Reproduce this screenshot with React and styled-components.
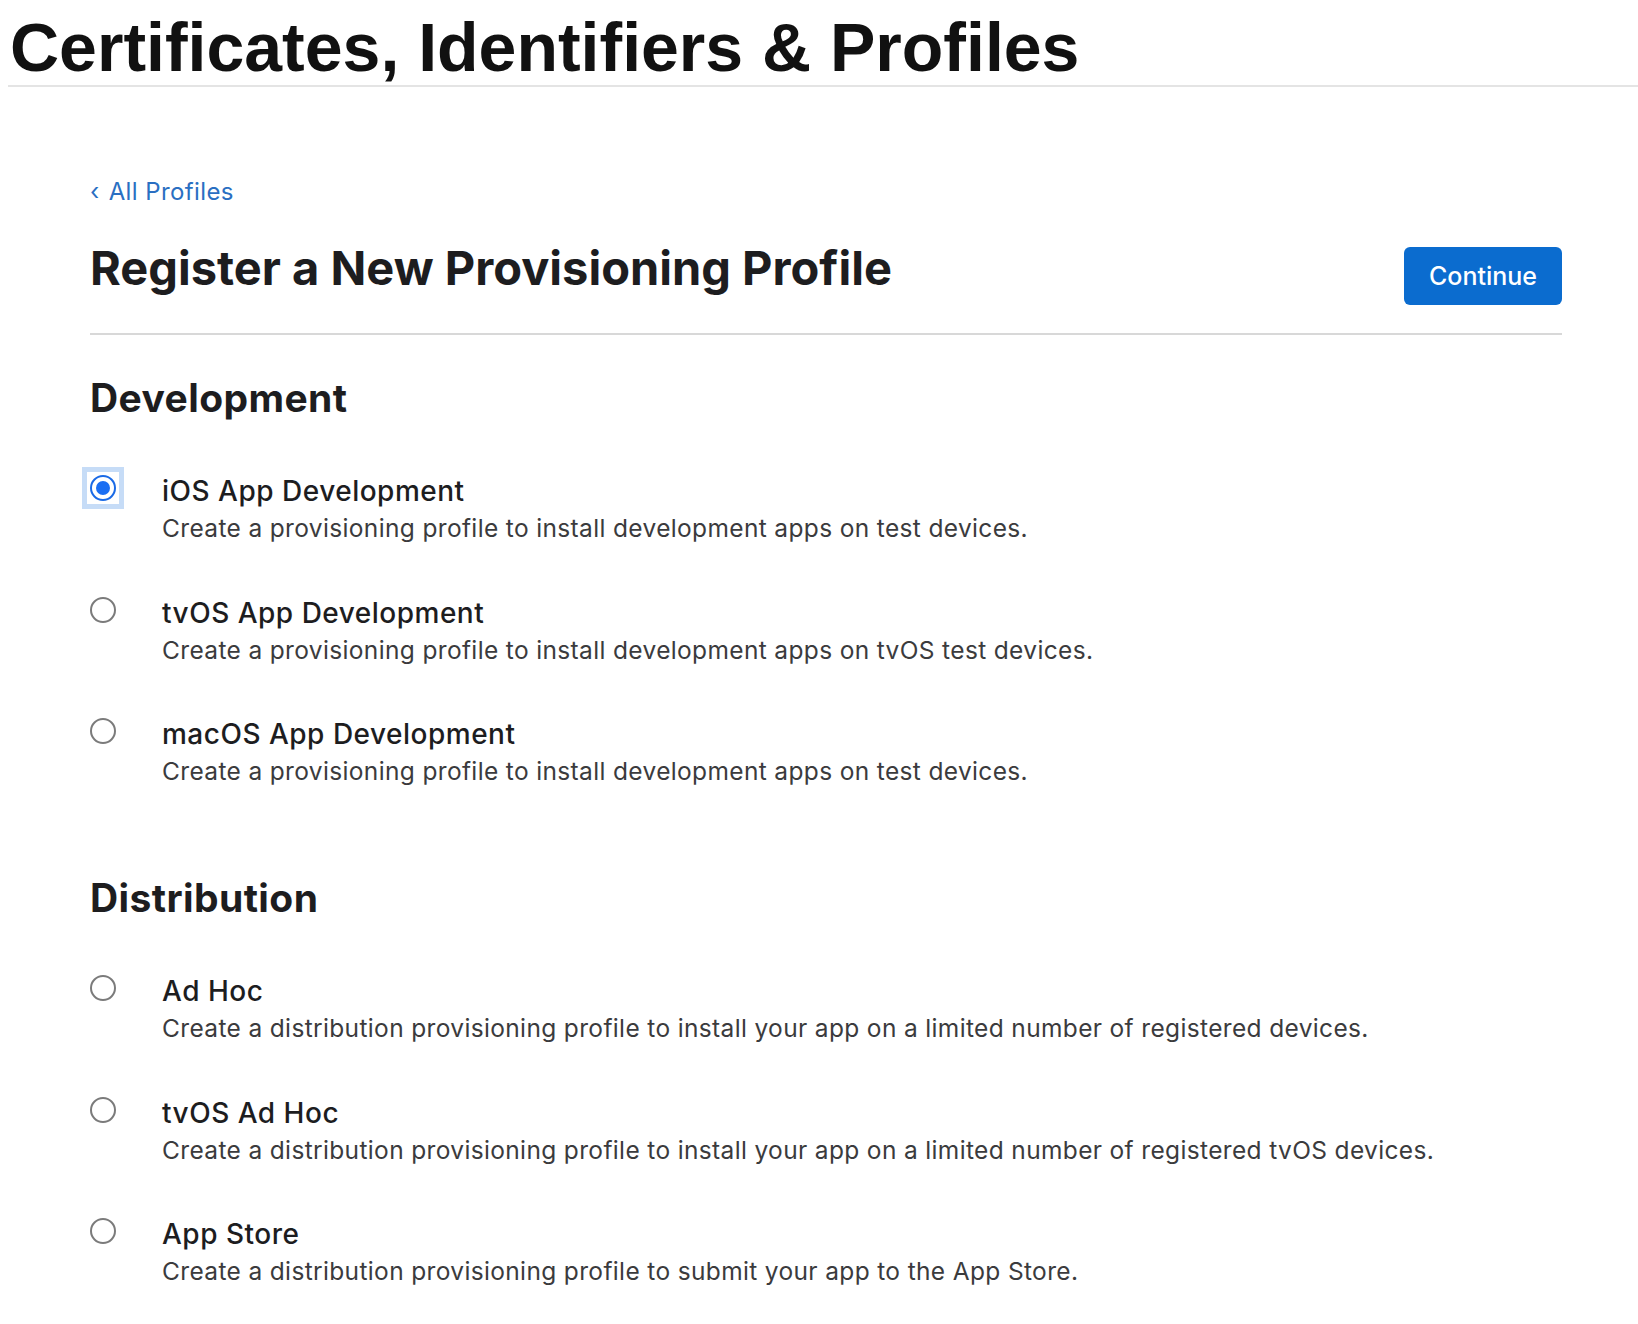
import React from "react";
import styled, {createGlobalStyle} from "styled-components";

const GlobalStyle = createGlobalStyle`
  html, body {
    margin: 0;
    padding: 0;
    background: #ffffff;
  }
  body {
    font-family: Inter, "Noto Sans", "Liberation Sans", sans-serif;
    color: #1d1d1f;
  }
`;

const Header = styled.header`
  margin-left: 8px;
  padding: 9px 0 0 2px;
  border-bottom: 2px solid #e4e4e4;
`;

const SiteTitle = styled.h1`
  margin: 0;
  font-family: "Liberation Sans", Arial, sans-serif;
  font-size: 68px;
  line-height: 76px;
  font-weight: 700;
  color: #111111;
`;

const Main = styled.main`
  padding: 91px 76px 60px 90px;
`;

const BackLink = styled.a`
  display: inline-flex;
  align-items: center;
  gap: 9px;
  font-size: 24px;
  line-height: 28px;
  letter-spacing: 0.4px;
  color: #2a6fc2;
  text-decoration: none;
  cursor: pointer;
`;

const Chevron = styled.span`
  font-size: 24px;
  line-height: 28px;
`;

const PageHead = styled.div`
  display: flex;
  justify-content: space-between;
  align-items: flex-start;
  margin-top: 34px;
  padding-bottom: 28px;
  border-bottom: 2px solid #d8d8d8;
`;

const PageTitle = styled.h2`
  margin: 0;
  font-size: 47px;
  line-height: 56px;
  font-weight: 700;
  color: #1d1d1f;
`;

const PrimaryButton = styled.button`
  margin-top: 7px;
  width: 158px;
  height: 58px;
  border: none;
  border-radius: 6px;
  background: #0b6ccf;
  color: #ffffff;
  font-family: inherit;
  font-size: 25px;
  font-weight: 500;
  cursor: pointer;
`;

const Section = styled.section`
  margin-top: ${p => p.$first ? '40px' : '84px'};
`;

const SectionTitle = styled.h3`
  margin: 0 0 53px 0;
  font-size: 39px;
  line-height: 46px;
  font-weight: 700;
  color: #1d1d1f;
  letter-spacing: 0.4px;
`;

const OptionList = styled.div`
  display: flex;
  flex-direction: column;
  gap: 47.5px;
`;

const Option = styled.label`
  display: grid;
  grid-template-columns: 72px 1fr;
  cursor: pointer;
`;

const RadioCell = styled.span`
  display: block;
  padding-top: 1px;
`;

const RadioSlot = styled.span`
  display: block;
  width: 26px;
  height: 26px;
  box-shadow: ${p => p.$focused ? '0 0 0 3px #ffffff, 0 0 0 8px #c6dcf7' : 'none'};
`;

const RadioMark = styled.span`
  display: flex;
  align-items: center;
  justify-content: center;
  box-sizing: border-box;
  width: 26px;
  height: 26px;
  border-radius: 50%;
  border: 2px solid ${p => p.$checked ? '#1a6ae6' : '#7b7b7b'};
  background: #ffffff;

  &::after {
    content: "";
    display: ${p => p.$checked ? 'block' : 'none'};
    width: 14px;
    height: 14px;
    border-radius: 50%;
    background: #1a6ef3;
  }
`;

const OptionText = styled.span`
  display: flex;
  flex-direction: column;
`;

const OptionName = styled.span`
  font-size: 28px;
  line-height: 35px;
  font-weight: 500;
  letter-spacing: 0.5px;
  color: #1d1d1f;
`;

const OptionDesc = styled.span`
  font-size: 24.5px;
  line-height: 39px;
  color: #3b3b3d;
  letter-spacing: 0.35px;
`;

const development = [
    {name: 'iOS App Development', desc: 'Create a provisioning profile to install development apps on test devices.'},
    {name: 'tvOS App Development', desc: 'Create a provisioning profile to install development apps on tvOS test devices.'},
    {name: 'macOS App Development', desc: 'Create a provisioning profile to install development apps on test devices.'},
];

const distribution = [
    {name: 'Ad Hoc', desc: 'Create a distribution provisioning profile to install your app on a limited number of registered devices.'},
    {name: 'tvOS Ad Hoc', desc: 'Create a distribution provisioning profile to install your app on a limited number of registered tvOS devices.'},
    {name: 'App Store', desc: 'Create a distribution provisioning profile to submit your app to the App Store.'},
];

function ProfileOption({name, desc, checked}) {
    return (
        <Option>
            <RadioCell>
                <RadioSlot $focused={checked}>
                    <RadioMark $checked={checked}/>
                </RadioSlot>
            </RadioCell>
            <OptionText>
                <OptionName>{name}</OptionName>
                <OptionDesc>{desc}</OptionDesc>
            </OptionText>
        </Option>
    )
}

export default function App() {
    const selected = 'iOS App Development';

    return (
        <>
            <GlobalStyle/>
            <Header>
                <SiteTitle>Certificates, Identifiers &amp; Profiles</SiteTitle>
            </Header>
            <Main>
                <BackLink><Chevron>‹</Chevron>All Profiles</BackLink>
                <PageHead>
                    <PageTitle>Register a New Provisioning Profile</PageTitle>
                    <PrimaryButton>Continue</PrimaryButton>
                </PageHead>

                <Section $first>
                    <SectionTitle>Development</SectionTitle>
                    <OptionList>
                        {development.map(o => (
                            <ProfileOption key={o.name} {...o} checked={o.name === selected}/>
                        ))}
                    </OptionList>
                </Section>

                <Section>
                    <SectionTitle>Distribution</SectionTitle>
                    <OptionList>
                        {distribution.map(o => (
                            <ProfileOption key={o.name} {...o} checked={o.name === selected}/>
                        ))}
                    </OptionList>
                </Section>
            </Main>
        </>
    )
}
